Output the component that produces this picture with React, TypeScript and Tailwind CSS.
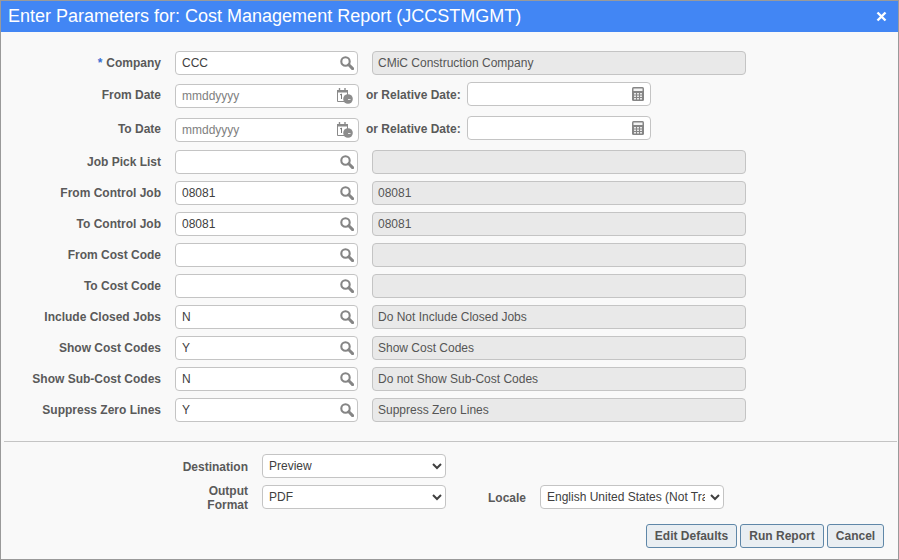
const font = { fontFamily: '"Liberation Sans", Arial, sans-serif' };

function SearchIcon() {
  return (
    <svg width="14" height="14" viewBox="0 0 14 14" className="shrink-0">
      <circle cx="5.5" cy="5.5" r="4.2" fill="none" stroke="#858585" strokeWidth="2.1" />
      <path d="M8.8 8.8l3.8 3.8" stroke="#858585" strokeWidth="3" strokeLinecap="round" />
    </svg>
  );
}

function CalendarIcon() {
  return (
    <svg width="16" height="16" viewBox="0 0 16 16" className="shrink-0">
      <path d="M0.5 2.5h10v11h-10z" fill="#fff" stroke="#8a8a8a" />
      <path d="M0 2h11v2.5H0z" fill="#8a8a8a" />
      <path d="M2.5 0v3M8 0v3" stroke="#8a8a8a" strokeWidth="1.4" />
      <path d="M3 7l1.5-1v5" fill="none" stroke="#7a7a7a" />
      <circle cx="11" cy="11" r="4.8" fill="#8c8c8c" />
      <path d="M11 11.5h2.5" stroke="#e8e8e8" />
    </svg>
  );
}

function CalcIcon() {
  return (
    <svg width="12" height="14" viewBox="0 0 12 14" className="shrink-0">
      <rect x="0" y="0" width="12" height="14" rx="1.5" fill="#858585" />
      <rect x="1.5" y="1.5" width="9" height="2.5" fill="#f2f2f2" />
      <path d="M2 6h2v1.5H2zM5 6h2v1.5H5zM8 6h2v1.5H8zM2 8.5h2V10H2zM5 8.5h2V10H5zM8 8.5h2V10H8zM2 11h2v1.5H2zM5 11h2v1.5H5zM8 11h2v1.5H8z" fill="#e8e8e8" />
    </svg>
  );
}

function Label({ children, required }: { children: string; required?: boolean }) {
  return (
    <div className="w-[160px] shrink-0 text-right text-[12px] font-bold text-[#5a5a5a]">
      {required && <span className="mr-1 text-[#3b6fd1]">*</span>}
      {children}
    </div>
  );
}

function LookupRow({ label, value = '', desc = '', required }: { label: string; value?: string; desc?: string; required?: boolean }) {
  return (
    <div className="flex h-6 items-center">
      <Label required={required}>{label}</Label>
      <div className="ml-3.5 flex h-6 w-[183px] items-center rounded border border-[#c4c4c4] bg-white pr-[3px]">
        <input readOnly defaultValue={value} className="h-full min-w-0 flex-1 bg-transparent pl-[6px] text-[12px] text-[#404040] outline-none" />
        <SearchIcon />
      </div>
      <div className="ml-3.5 flex h-6 w-[374px] items-center rounded border border-[#c4c4c4] bg-[#e9e9e9] pl-[5px] text-[12px] text-[#555555]">
        {desc}
      </div>
    </div>
  );
}

function DateRow({ label }: { label: string }) {
  return (
    <div className="flex h-[27px]">
      <div className="flex h-[27px] items-end pb-[5px]">
        <Label>{label}</Label>
      </div>
      <div className="mt-[2px] ml-3.5 flex h-6 w-[184px] items-center rounded border border-[#c4c4c4] bg-white pr-[5px]">
        <input readOnly placeholder="mmddyyyy" className="h-full min-w-0 flex-1 bg-transparent pl-[6px] text-[12px] text-[#404040] outline-none placeholder:text-[#808080]" />
        <CalendarIcon />
      </div>
      <div className="ml-[7px] pt-[4px] text-[12px] font-bold text-[#5a5a5a]">or Relative Date:</div>
      <div className="ml-[6px] flex h-6 w-[184px] items-center justify-end rounded border border-[#c4c4c4] bg-white pr-[6px]">
        <CalcIcon />
      </div>
    </div>
  );
}

function Btn({ children, w }: { children: string; w: string }) {
  return (
    <button type="button" className={`h-6 rounded-[3px] border border-[#5f87a8] bg-[#e9eef2] text-[12px] font-bold text-[#555555] ${w}`}>
      {children}
    </button>
  );
}

export default function App() {
  return (
    <div style={font} className="flex h-[560px] w-[899px] flex-col border border-[#9a9a9a] bg-[#f9f9f9]">
      {/* Title bar */}
      <div className="flex h-[31px] shrink-0 items-center justify-between bg-[#4286f4] pr-[11px] pl-[7px] text-[18px] text-white">
        <span>Enter Parameters for: Cost Management Report (JCCSTMGMT)</span>
        <svg width="11" height="11" viewBox="0 0 11 11">
          <path d="M1.5 1.5l8 8M9.5 1.5l-8 8" stroke="#fff" strokeWidth="2.4" />
        </svg>
      </div>

      {/* Parameters */}
      <div className="flex flex-col gap-[7px] pt-[19px]">
        <LookupRow required label="Company" value="CCC" desc="CMiC Construction Company" />
        <DateRow label="From Date" />
        <DateRow label="To Date" />
        <LookupRow label="Job Pick List" />
        <LookupRow label="From Control Job" value="08081" desc="08081" />
        <LookupRow label="To Control Job" value="08081" desc="08081" />
        <LookupRow label="From Cost Code" />
        <LookupRow label="To Cost Code" />
        <LookupRow label="Include Closed Jobs" value="N" desc="Do Not Include Closed Jobs" />
        <LookupRow label="Show Cost Codes" value="Y" desc="Show Cost Codes" />
        <LookupRow label="Show Sub-Cost Codes" value="N" desc="Do not Show Sub-Cost Codes" />
        <LookupRow label="Suppress Zero Lines" value="Y" desc="Suppress Zero Lines" />
      </div>

      <div className="mt-[19px] ml-[3px] mr-[1px] border-t border-[#c4c4c4]" />

      {/* Output options */}
      <div className="mt-[12px] flex h-6 items-center">
        <div className="w-[247px] pt-[2px] text-right text-[12px] font-bold text-[#5a5a5a]">Destination</div>
        <select className="ml-3.5 h-6 w-[184px] rounded border border-[#c4c4c4] bg-white pr-[2px] pl-[2px] text-[12px] text-[#404040]">
          <option>Preview</option>
        </select>
      </div>
      <div className="mt-[7px] flex h-6 items-center">
        <div className="w-[247px] pt-[2px] text-right text-[12px] leading-[14px] font-bold text-[#5a5a5a]">
          Output
          <br />
          Format
        </div>
        <select className="ml-3.5 h-6 w-[184px] rounded border border-[#c4c4c4] bg-white pr-[2px] pl-[2px] text-[12px] text-[#404040]">
          <option>PDF</option>
        </select>
        <div className="ml-[42px] w-[51px] pt-[2px] text-[12px] font-bold text-[#5a5a5a]">Locale</div>
        <select className="ml-[1px] h-6 w-[184px] rounded border border-[#c4c4c4] bg-white pr-[2px] pl-[2px] text-[12px] text-[#404040]">
          <option>English United States (Not Translated)</option>
        </select>
      </div>

      <div className="mt-[15px] flex justify-end gap-[3px] pr-[14px]">
        <Btn w="w-[91px]">Edit Defaults</Btn>
        <Btn w="w-[84px]">Run Report</Btn>
        <Btn w="w-[57px]">Cancel</Btn>
      </div>
    </div>
  );
}
